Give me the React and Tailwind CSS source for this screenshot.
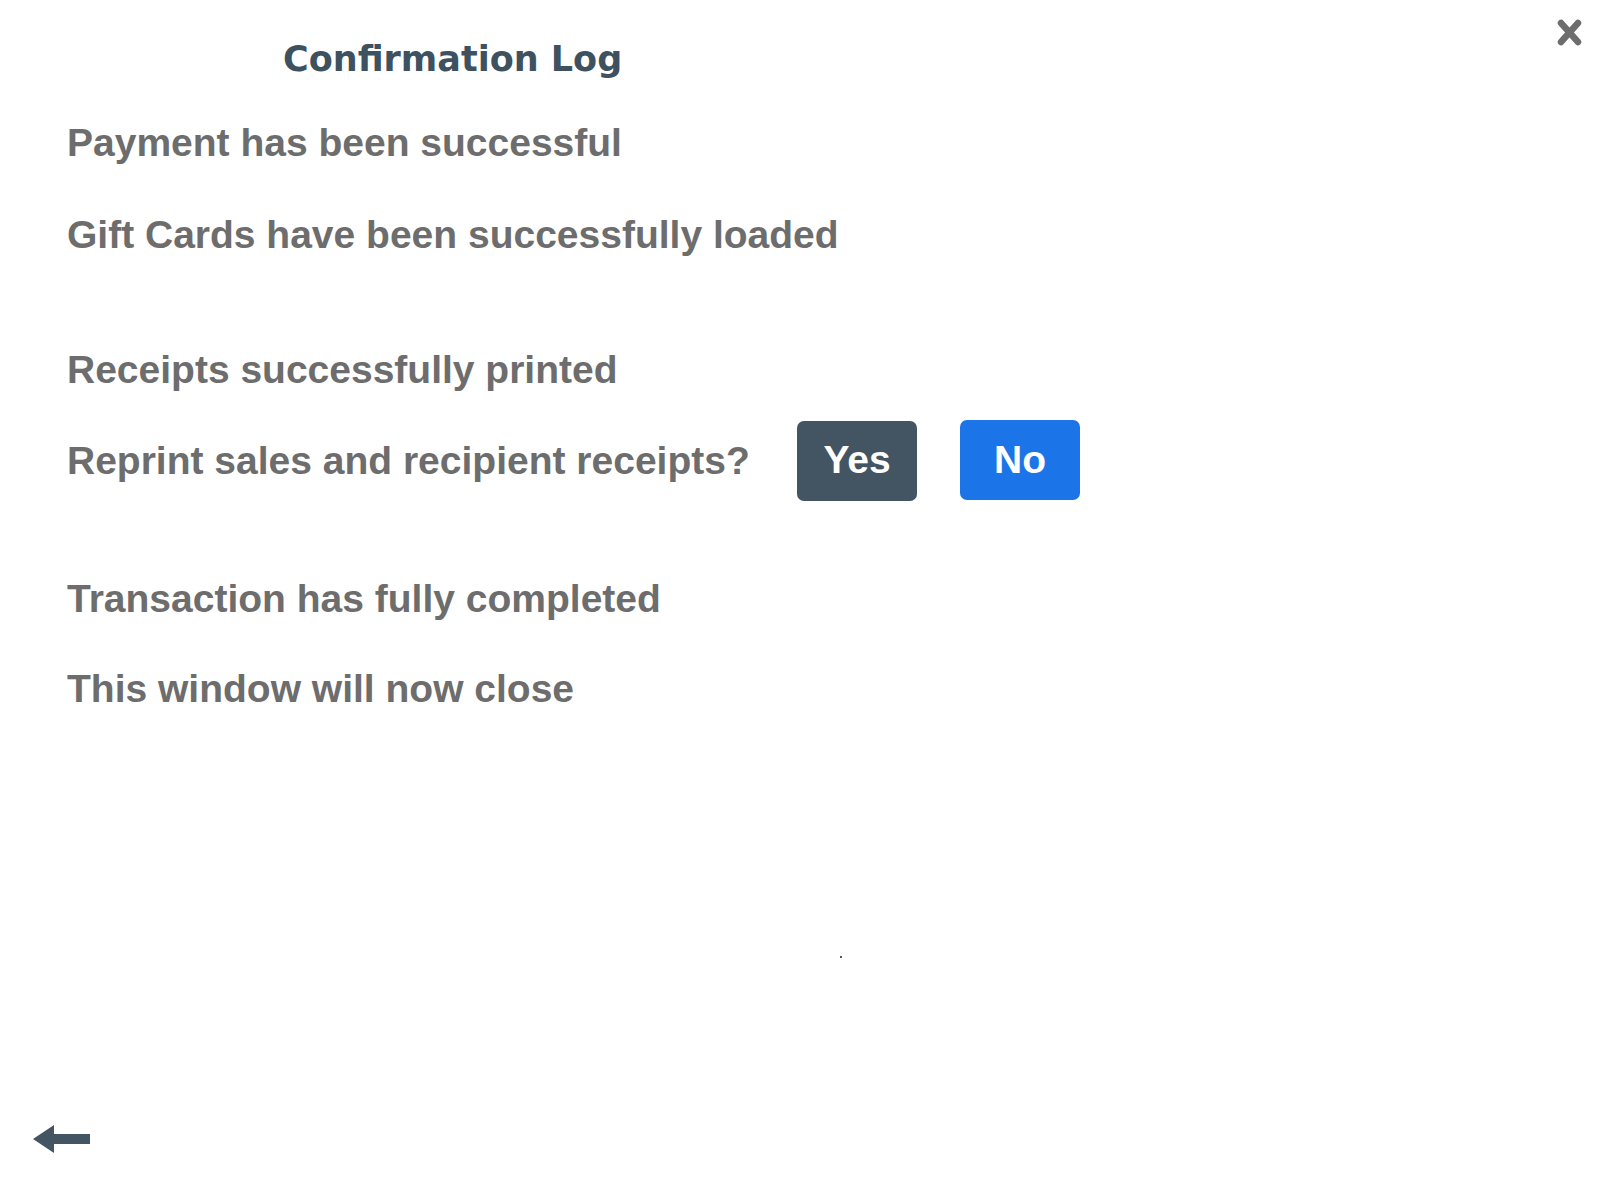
import React from "react";

const lines = {
  body: "text-[39px] leading-[48px] font-bold text-[#6d6d6d] font-['Liberation_Sans',Arial,sans-serif]",
};

const App = () => {
  return (
    <div className="relative w-full h-[1200px] bg-white overflow-hidden">
      {/* Close */}
      <button className="absolute top-[19px] right-[18px]">
        <svg width="25" height="27" viewBox="0 0 25 27">
          <path d="M4 4 L21 23 M21 4 L4 23" stroke="#6d6d6d" strokeWidth="6.5" strokeLinecap="round" fill="none" />
        </svg>
      </button>

      {/* Title */}
      <h1 className="pt-[39px] pl-[283px] text-[35px] leading-[40px] font-bold text-[#3e5160] font-['DejaVu_Sans',Verdana,sans-serif]">
        Confirmation Log
      </h1>

      {/* Log */}
      <div className="flex flex-col pl-[67px] pr-[66px]">
        <p className={`${lines.body} mt-[40px]`}>Payment has been successful</p>
        <p className={`${lines.body} mt-[44px]`}>Gift Cards have been successfully loaded</p>
        <p className={`${lines.body} mt-[87px]`}>Receipts successfully printed</p>
        <div className="flex items-center mt-[27px] h-[80px]">
          <p className={`${lines.body} w-[730px] shrink-0`}>Reprint sales and recipient receipts?</p>
          <button className="w-[120px] h-[80px] rounded-[7px] bg-[#435563] text-white text-[39px] font-bold font-['Liberation_Sans',Arial,sans-serif] -mt-[1px]">
            Yes
          </button>
          <button className="ml-[43px] w-[120px] h-[80px] rounded-[7px] bg-[#1b74e8] text-white text-[39px] font-bold font-['Liberation_Sans',Arial,sans-serif] -mt-[2px]">
            No
          </button>
        </div>
        <p className={`${lines.body} mt-[74px]`}>Transaction has fully completed</p>
        <p className={`${lines.body} mt-[42px]`}>This window will now close</p>
      </div>

      <span className="absolute left-[840px] top-[956px] w-[2px] h-[2px] bg-[#555]"></span>

      {/* Back */}
      <button className="absolute left-[33px] top-[1125px]">
        <svg width="57" height="28" viewBox="0 0 57 28">
          <path d="M0 14 L21 0 L21 9 L57 9 L57 19 L21 19 L21 28 Z" fill="#435563" />
        </svg>
      </button>
    </div>
  );
};

export default App;
